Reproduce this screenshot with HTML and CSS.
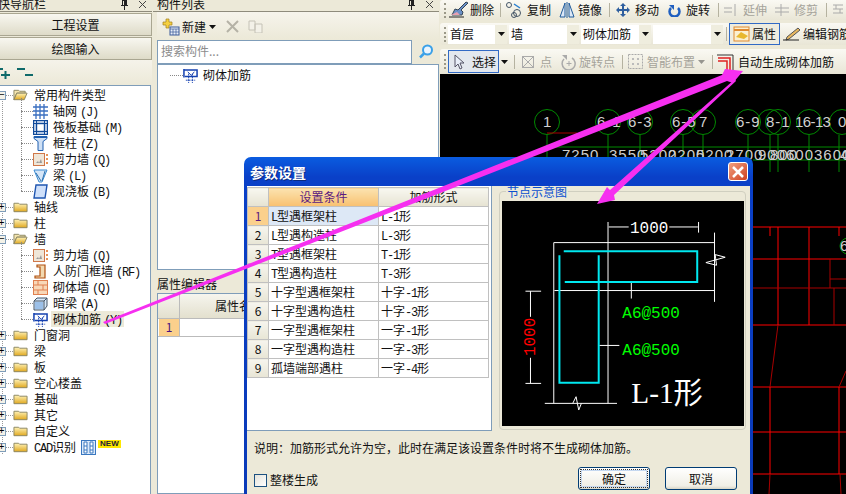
FILE: index.html
```html
<!DOCTYPE html>
<html lang="zh">
<head>
<meta charset="utf-8">
<title>参数设置</title>
<link rel="stylesheet" href="styles.css">
</head>
<body>
<svg class="defs" width="0" height="0">
  <defs>
    <linearGradient id="fy" x1="0" y1="0" x2="0" y2="1"><stop offset="0" stop-color="#fff3b8"/><stop offset="1" stop-color="#e0a820"/></linearGradient>
    <symbol id="folder" viewBox="0 0 16 12"><path d="M1 2h5l1 1h8v8H1z" fill="url(#fy)" stroke="#8a8460"/></symbol>
    <symbol id="folder-open" viewBox="0 0 16 12"><path d="M1 1h5l1 1h6v2H4L1 11z" fill="#f5e6b0" stroke="#8a8460"/><path d="M1 11l3-7h11l-3 7z" fill="url(#fy)" stroke="#8a8460"/></symbol>
    <symbol id="i-grid" viewBox="0 0 15 15"><path d="M0 3h15M0 7h15M0 11h15M3 0v15M7 0v15M11 0v15" stroke="#3a6fc0" stroke-width="1.3" fill="none"/></symbol>
    <symbol id="i-raft" viewBox="0 0 15 15"><rect x=".5" y=".5" width="14" height="14" fill="#dfe8f5" stroke="#0f4a9a" stroke-width="1.4"/><rect x="3.5" y="3.5" width="8" height="8" fill="#fff" stroke="#0f4a9a" stroke-width="1.4"/><path d="M0 3.5h15M0 11.5h15M3.5 0v15M11.5 0v15" stroke="#0f4a9a"/></symbol>
    <symbol id="i-col" viewBox="0 0 15 15"><path d="M1 .5h13v2l-4 3v9H5v-9l-4-3z" fill="#cfe0f5" stroke="#1f5fb0"/><path d="M1 1h13" stroke="#1f5fb0" stroke-width="2"/></symbol>
    <symbol id="i-shear" viewBox="0 0 15 15"><rect x=".5" y="1.500" width="11" height="12" fill="#efe6d8" stroke="#d0784a"/><path d="M3 11l2-2 1 2 2-4 1 4z" fill="#999"/><path d="M13 3h2M13 7h2M13 11h2" stroke="#e07020" stroke-width="1.500"/></symbol>
    <symbol id="i-beam" viewBox="0 0 15 15"><path d="M1 2h13L9 14H6z" fill="#d5e6f8" stroke="#3a8ad0"/><path d="M3 5l5 8M12 3l-3 10" stroke="#2a70b0"/></symbol>
    <symbol id="i-slab" viewBox="0 0 15 15"><path d="M3 1h11l-2 13H1z" fill="#cfe0fa" stroke="#1f55b0" stroke-width="1.400"/></symbol>
    <symbol id="i-door" viewBox="0 0 15 15"><path d="M4 1h8v13H2v-2h5V3H4z" fill="#f2d9b0" stroke="#b05010" stroke-width="1.200"/></symbol>
    <symbol id="i-brick" viewBox="0 0 15 15"><rect x=".5" y=".5" width="14" height="14" fill="#f8d8b8" stroke="#e08050"/><path d="M0 5h15M0 10h15M5 0v5M10 5v5M5 10v5" stroke="#e08050"/></symbol>
    <symbol id="i-hidden" viewBox="0 0 15 15"><path d="M1 5l3-3h10v8l-3 4H1z" fill="#d8e8f8" stroke="#456"/><path d="M1 5h10v9M11 5l3-3" stroke="#456" fill="none"/><rect x="2" y="6" width="8" height="7" fill="#9cc0e8"/></symbol>
    <symbol id="i-rebar" viewBox="0 0 16 16"><path d="M1 2h14v7H2" fill="none" stroke="#1440b0" stroke-width="1.600"/><path d="M1 1v9" stroke="#1440b0" stroke-width="1.600"/><path d="M6 6v10M10 6v10M3 13h10" stroke="#1440b0" fill="none" stroke-dasharray="2 1"/><path d="M5 4l4 4 3-4" stroke="#1440b0" fill="none"/></symbol>
    <symbol id="i-cad" viewBox="0 0 15 15"><rect x=".5" y=".5" width="14" height="14" fill="#dceafa" stroke="#3a78c0"/><path d="M3 2v11h3V2zM9 2v11h3V2zM3 6h3M3 10h3M9 6h3M9 10h3" stroke="#3a78c0" fill="#fff"/></symbol>
    <symbol id="i-pin" viewBox="0 0 9 10"><path d="M2 0h5v5h1v1H5v4H4V6H1V5h1zM3 1v4h1V1z" fill="#222"/></symbol>
    <symbol id="i-x" viewBox="0 0 9 9"><path d="M1 1l7 7M8 1L1 8" stroke="#444" fill="none"/></symbol>
    <symbol id="i-caret" viewBox="0 0 7 4"><path d="M0 0h7L3.500 4z" fill="#111"/></symbol>
  </defs>
</svg>

<div class="app">
  <aside class="nav">
    <div class="phead"><span class="ptitle nav-title">快导航栏</span><svg class="pin"><use href="#i-pin"/></svg><svg class="close"><use href="#i-x"/></svg></div>
    <div class="navbtn">工程设置</div>
    <div class="navbtn">绘图输入</div>
    <div class="navtools">
      <svg width="12" height="11" viewBox="0 0 12 11"><path d="M0 1h3M1 7h9M5.500 3v8" stroke="#0f6a6a" stroke-width="2" fill="none"/></svg>
      <svg width="16" height="9" viewBox="0 0 16 9"><path d="M0 1h8M8 7h8" stroke="#0f6a6a" stroke-width="2" fill="none"/></svg>
    </div>
    <div class="tree">
      <div class="row"><span class="exp">−</span><span class="stub"></span><svg class="fld"><use href="#folder-open"/></svg><span>常用构件类型</span></div>
      <div class="kids">
        <div class="kid"><svg class="ic"><use href="#i-grid"/></svg><span>轴网<i class="m">(J)</i></span></div>
        <div class="kid"><svg class="ic"><use href="#i-raft"/></svg><span>筏板基础<i class="m">(M)</i></span></div>
        <div class="kid"><svg class="ic"><use href="#i-col"/></svg><span>框柱<i class="m">(Z)</i></span></div>
        <div class="kid"><svg class="ic"><use href="#i-shear"/></svg><span>剪力墙<i class="m">(Q)</i></span></div>
        <div class="kid"><svg class="ic"><use href="#i-beam"/></svg><span>梁<i class="m">(L)</i></span></div>
        <div class="kid"><svg class="ic"><use href="#i-slab"/></svg><span>现浇板<i class="m">(B)</i></span></div>
      </div>
      <div class="row"><span class="exp">+</span><span class="stub"></span><svg class="fld"><use href="#folder"/></svg><span>轴线</span></div>
      <div class="row"><span class="exp">+</span><span class="stub"></span><svg class="fld"><use href="#folder"/></svg><span>柱</span></div>
      <div class="row"><span class="exp">−</span><span class="stub"></span><svg class="fld"><use href="#folder-open"/></svg><span>墙</span></div>
      <div class="kids">
        <div class="kid"><svg class="ic"><use href="#i-shear"/></svg><span>剪力墙<i class="m">(Q)</i></span></div>
        <div class="kid"><svg class="ic"><use href="#i-door"/></svg><span>人防门框墙<i class="m">(RF)</i></span></div>
        <div class="kid"><svg class="ic"><use href="#i-brick"/></svg><span>砌体墙<i class="m">(Q)</i></span></div>
        <div class="kid"><svg class="ic"><use href="#i-hidden"/></svg><span>暗梁<i class="m">(A)</i></span></div>
        <div class="kid"><svg class="ic"><use href="#i-rebar"/></svg><span class="sel">砌体加筋<i class="m">(Y)</i></span></div>
      </div>
      <div class="row"><span class="exp">+</span><span class="stub"></span><svg class="fld"><use href="#folder"/></svg><span>门窗洞</span></div>
      <div class="row"><span class="exp">+</span><span class="stub"></span><svg class="fld"><use href="#folder"/></svg><span>梁</span></div>
      <div class="row"><span class="exp">+</span><span class="stub"></span><svg class="fld"><use href="#folder"/></svg><span>板</span></div>
      <div class="row"><span class="exp">+</span><span class="stub"></span><svg class="fld"><use href="#folder"/></svg><span>空心楼盖</span></div>
      <div class="row"><span class="exp">+</span><span class="stub"></span><svg class="fld"><use href="#folder"/></svg><span>基础</span></div>
      <div class="row"><span class="exp">+</span><span class="stub"></span><svg class="fld"><use href="#folder"/></svg><span>其它</span></div>
      <div class="row"><span class="exp">+</span><span class="stub"></span><svg class="fld"><use href="#folder"/></svg><span>自定义</span></div>
      <div class="row"><span class="exp">+</span><span class="stub"></span><svg class="fld"><use href="#folder"/></svg><span><i class="m">CAD</i>识别</span><svg class="cad"><use href="#i-cad"/></svg><b class="new">NEW</b></div>
    </div>
  </aside>

  <section class="mid">
    <div class="phead"><span class="ptitle">构件列表</span><svg class="pin"><use href="#i-pin"/></svg><svg class="close"><use href="#i-x"/></svg></div>
    <div class="midtools">
      <svg width="18" height="18" viewBox="0 0 18 18"><path d="M4 1h3v3h3v3H7v3H4V7H1V4h3z" fill="#f5d040" stroke="#a08020" stroke-width=".7"/><rect x="8" y="9" width="9" height="8" fill="#e8eef8" stroke="#3a5a9a"/><path d="M8 11h9M11 11v6M14 11v6M8 14h9" stroke="#3a5a9a" stroke-width=".7"/></svg>
      <span>新建</span><svg class="caret"><use href="#i-caret"/></svg>
      <svg class="del" width="13" height="13" viewBox="0 0 13 13"><path d="M1 1l11 11M12 1L1 12" stroke="#b5b2a6" stroke-width="2"/></svg>
      <svg class="cpy" width="16" height="13" viewBox="0 0 16 13"><path d="M1 1h6v9H1zM7 4h7v9H7z" fill="#f3f1e8" stroke="#c5c2b6"/></svg>
    </div>
    <div class="search">
      <div class="sinput">搜索构件...</div>
      <svg width="16" height="16" viewBox="0 0 16 16"><circle cx="9.500" cy="6" r="4.500" fill="#eaf5ff" stroke="#3aa0e8" stroke-width="2"/><path d="M6 9.500l-4 4" stroke="#3aa0e8" stroke-width="2.500"/></svg>
    </div>
    <div class="listbox">
      <div class="listrow"><span class="stub2"></span><svg class="ic"><use href="#i-rebar"/></svg><span>砌体加筋</span></div>
    </div>
    <div class="ptitle2">属性编辑器</div>
    <div class="props">
      <div class="pr-h"><span class="pr-n"></span><span class="pr-t">属性名称</span></div>
      <div class="pr-r"><span class="pr-n num">1</span><span class="pr-v"></span></div>
    </div>
  </section>

  <main class="work">
    <div class="bar bar1">
      <span class="grip"></span>
      <span class="tool t-del"><svg width="19" height="18" viewBox="0 0 19 18"><path d="M17 1l-8 8-3-1-3 6h10l1-3-2-2 7-7z" fill="#6a90c8" stroke="#345"/><path d="M2 14l6-3 3 3" fill="#e8a0b0"/><path d="M0 16h15" stroke="#222"/></svg>删除</span>
      <span class="sep"></span>
      <span class="tool t-cpy"><svg width="17" height="16" viewBox="0 0 17 16"><circle cx="3" cy="3" r="2.500" fill="none" stroke="#456"/><circle cx="11" cy="11" r="3.500" fill="none" stroke="#456"/><circle cx="8" cy="13" r="2.500" fill="none" stroke="#456"/><path d="M8 2l6 4" stroke="#2a80d0" stroke-width="1.500"/></svg>复制</span>
      <span class="tool t-mir"><svg width="16" height="16" viewBox="0 0 16 16"><path d="M6 1L1 15h5zM10 1l5 14h-5z" fill="#dce8f8" stroke="#1f5a9a"/><path d="M8 0v16" stroke="#1f5a9a"/></svg>镜像</span>
      <span class="sep"></span>
      <span class="tool t-mov"><svg width="14" height="14" viewBox="0 0 14 14"><path d="M7 0l3 3H8v3h3V4l3 3-3 3V8H8v3h2l-3 3-3-3h2V8H3v2L0 7l3-3v2h3V3H4z" fill="#2f5f9f"/></svg>移动</span>
      <span class="tool t-rot"><svg width="13" height="13" viewBox="0 0 13 13"><path d="M3 4a5 5 0 1 0 7 0" fill="none" stroke="#1f5fc0" stroke-width="2.500"/><path d="M1 1h5v5z" fill="#1f5fc0"/></svg>旋转</span>
      <span class="sep"></span>
      <span class="tool off t-ext"><svg width="14" height="12" viewBox="0 0 14 12"><path d="M0 4h8M0 8h8M11 0v12" stroke="#aaa" fill="none"/></svg>延伸</span>
      <span class="tool off t-trm"><svg width="14" height="12" viewBox="0 0 14 12"><path d="M0 4h14M0 8h14M6 0v12" stroke="#aaa" fill="none"/></svg>修剪</span>
      <span class="sep"></span>
      <span class="tool off"><svg width="14" height="14" viewBox="0 0 14 14"><path d="M2 2h10M2 6h10M2 10h10M5 2v4M9 6v4" stroke="#aaa" fill="none"/></svg></span>
    </div>
    <div class="bar bar2">
      <span class="grip"></span>
      <div class="combo c1"><span>首层</span><b><svg class="caret"><use href="#i-caret"/></svg></b></div>
      <div class="combo c1 c2"><span>墙</span><b><svg class="caret"><use href="#i-caret"/></svg></b></div>
      <div class="combo c1 c2"><span>砌体加筋</span><b><svg class="caret"><use href="#i-caret"/></svg></b></div>
      <div class="combo c1 c2"><span></span><b><svg class="caret"><use href="#i-caret"/></svg></b></div>
      <span class="sep"></span>
      <span class="btnon attr"><svg width="18" height="16" viewBox="0 0 18 16"><rect x="1" y="1" width="15" height="14" fill="#fbf0d0" stroke="#e08a30"/><path d="M3 11l5-5 7 4-4 3z" fill="#e8b830"/><path d="M1 4h15" stroke="#e08a30" stroke-width="2"/></svg>属性</span>
      <span class="tool t-edit"><svg width="18" height="14" viewBox="0 0 18 14"><path d="M4 10L15 1l2 2-11 9-3 1z" fill="#e8b860" stroke="#555"/><path d="M0 13h16" stroke="#222"/></svg>编辑钢筋</span>
    </div>
    <div class="bar bar3">
      <span class="grip"></span>
      <span class="btnon pick"><svg width="12" height="16" viewBox="0 0 12 16"><path d="M1 1v12l3-3 2 5 2-1-2-5h4z" fill="#e8eef8" stroke="#556"/></svg>选择</span>
      <svg class="caret c-sel"><use href="#i-caret"/></svg>
      <span class="sep s-a"></span>
      <span class="tool off t-pt"><svg width="12" height="12" viewBox="0 0 12 12"><rect x=".5" y=".5" width="11" height="11" fill="none" stroke="#aaa"/><path d="M0 0l12 12M12 0L0 12" stroke="#aaa"/></svg>点</span>
      <span class="tool off t-rp"><svg width="16" height="16" viewBox="0 0 16 16"><path d="M3 5a6.500 6.500 0 1 0 8-1" fill="none" stroke="#aaa" stroke-width="1.500"/><path d="M1 1h5v5z" fill="#aaa"/><path d="M8 7v5M5.500 9.500h5" stroke="#aaa"/></svg>旋转点</span>
      <span class="sep s-b"></span>
      <span class="tool off t-sm"><svg width="15" height="15" viewBox="0 0 15 15"><rect x=".5" y=".5" width="14" height="14" fill="none" stroke="#aaa" stroke-dasharray="2 1"/><path d="M4 4h2v2H4zM9 4h2v2H9zM4 9h2v2H4zM9 9h2v2H9z" fill="#bbb"/></svg>智能布置</span>
      <svg class="caret c-sm"><use href="#i-caret"/></svg>
      <span class="sep s-c"></span>
      <span class="tool t-auto"><svg width="17" height="16" viewBox="0 0 17 16"><path d="M0 1h16v15" fill="none" stroke="#333"/><path d="M1 4h12v12M1 7h9v9" fill="none" stroke="#e02020" stroke-width="1.500"/></svg>自动生成砌体加筋</span>
    </div>
    <svg class="cad-view" viewBox="440 74 406 420" width="406" height="420">
      <g class="g-line">
        <circle cx="547" cy="122" r="12.500"/><circle cx="608" cy="122" r="12.500"/><circle cx="640" cy="122" r="12.500"/><circle cx="683" cy="122" r="12.500"/><circle cx="703" cy="122" r="12.500"/><circle cx="748" cy="122" r="12.500"/><circle cx="770" cy="122" r="12.500"/><circle cx="778" cy="122" r="12.500"/><circle cx="809" cy="122" r="12.500"/><circle cx="842" cy="122" r="12.500"/><circle cx="848" cy="246" r="8"/>
        <path d="M547 135v37M608 135v37M640 135v37M683 135v37M703 135v37M748 135v37M770 135v37M778 135v37M809 135v37M839 135v37M545 147h301M753 160h93"/>
      </g>
      <path class="r-dark" d="M547 133h30"/>
      <g class="cad-txt">
        <text x="543" y="127">1</text><text x="597" y="127">6-1</text><text x="628" y="127">6-3</text><text x="672" y="127">6-5</text><text x="699" y="127">7</text><text x="736" y="127">6-9</text><text x="766" y="127">8-1</text><text x="795" y="127" class="tight">16-13</text><text x="838" y="127">0-</text><text x="840" y="251">6</text>
        <text x="562" y="160">7250</text><text x="609" y="160">3550</text><text x="640" y="160">5200</text><text x="668" y="160">2200</text><text x="696" y="160">5200</text><text x="726" y="160">2700</text><text x="758" y="160">900</text><text x="770" y="160">800</text><text x="786" y="160">600</text><text x="814" y="160">3600</text><text x="840" y="160">4</text>
      </g>
      <path class="r-line" d="M753 227h93M753 259h93M778 227v98M809 227v98M770 227v9M839 227v9M753 325h93M753 387h93M753 432h93M753 474h93M770 387v87M839 387v87"/>
      <path class="r-dark" d="M753 288h93M830 259v29M830 279h16M834 288v37M778 325l-8 62M846 371l-7 16M770 474l-1 20M840 474l1 20"/>
    </svg>
  </main>
</div>

<div class="dialog">
  <div class="dtitle"><span>参数设置</span><b class="dclose"><svg width="12" height="12" viewBox="0 0 12 12"><path d="M1 1l10 10M11 1L1 11" stroke="#fff" stroke-width="2.500"/></svg></b></div>
  <div class="dbody">
    <div class="dmain">
      <div class="dtable">
        <table>
          <thead><tr><th class="rh"></th><th class="hot">设置条件</th><th>加筋形式</th></tr></thead>
          <tbody>
            <tr><th class="rh hotn">1</th><td class="cur"><i class="m">L</i>型遇框架柱</td><td><i class="m">L-1</i>形</td></tr>
            <tr><th class="rh">2</th><td><i class="m">L</i>型遇构造柱</td><td><i class="m">L-3</i>形</td></tr>
            <tr><th class="rh">3</th><td><i class="m">T</i>型遇框架柱</td><td><i class="m">T-1</i>形</td></tr>
            <tr><th class="rh">4</th><td><i class="m">T</i>型遇构造柱</td><td><i class="m">T-3</i>形</td></tr>
            <tr><th class="rh">5</th><td>十字型遇框架柱</td><td>十字<i class="m">-1</i>形</td></tr>
            <tr><th class="rh">6</th><td>十字型遇构造柱</td><td>十字<i class="m">-3</i>形</td></tr>
            <tr><th class="rh">7</th><td>一字型遇框架柱</td><td>一字<i class="m">-1</i>形</td></tr>
            <tr><th class="rh">8</th><td>一字型遇构造柱</td><td>一字<i class="m">-3</i>形</td></tr>
            <tr><th class="rh">9</th><td>孤墙端部遇柱</td><td>一字<i class="m">-4</i>形</td></tr>
          </tbody>
        </table>
      </div>
      <fieldset class="preview">
        <legend>节点示意图</legend>
        <svg class="node" viewBox="20 137 726 676" width="242" height="225">
          <g class="n-w">
            <path d="M175 262H658M175 262V745M338 200V745M177 406H658M658 232V440M148 745H365M610 200V232M340 215H400M522 215H608M90 408H137M90 685H137M105 408V485M105 608V685M408 380V430M312 571H372"/>
            <path d="M232 745l10-20 8 40 8-20M632 322l58-16-30-8 4 32-32-8"/>
          </g>
          <path class="n-c" d="M205 288H606V380H208M310 300V683H192V300"/>
          <text class="n-t" x="404" y="232">1000</text>
          <text class="n-r" transform="translate(120 603) rotate(-90)">1000</text>
          <text class="n-g" x="381" y="490">A6@500</text>
          <text class="n-g" x="381" y="601">A6@500</text>
          <text class="n-l" x="408" y="745">L-1形</text>
        </svg>
      </fieldset>
    </div>
    <p class="note">说明：加筋形式允许为空，此时在满足该设置条件时将不生成砌体加筋。</p>
    <div class="dfoot">
      <label class="chk"><span class="box"></span>整楼生成</label>
      <div class="btns"><span class="btn def"><span>确定</span></span><span class="btn"><span>取消</span></span></div>
    </div>
  </div>
</div>

<svg class="arrows" viewBox="0 0 846 494" width="846" height="494">
  <polygon points="103,322 722,75 725,69 743,71 733,83 727,81 105,324"/>
  <polygon points="735,79 736,81 614,195 615,200 597,204 607,187 610,190"/>
</svg>
</body>
</html>
```
FILE: styles.css
```css
* { box-sizing: border-box; }
html, body { margin: 0; padding: 0; }
body {
  width: 846px; height: 494px; overflow: hidden; position: relative;
  background: #ece9d8; color: #111;
  font: 12px/16px "Noto Sans CJK SC", "Liberation Sans", sans-serif;
}
.defs { position: absolute; }
.m { font: normal 12px/12px "Liberation Mono", monospace; letter-spacing: -1.2px; }
.app { display: flex; height: 494px; }

/* left nav */
.nav { width: 152px; flex: none; display: flex; flex-direction: column; overflow: hidden; }
.phead { height: 12px; display: flex; align-items: flex-start; overflow: hidden; border-bottom: 1px solid #8e8b7c; background: #ece9d8; position: relative; }
.ptitle { line-height: 8px; white-space: nowrap; flex: 1; }
.nav-title { margin-left: -2px; }
.pin { width: 9px; height: 10px; margin: 0 9px 0 0; }
.close { width: 9px; height: 9px; margin: 0 5px 0 0; }
.navbtn { height: 23px; margin-top: 1px; line-height: 22px; text-align: center; border: 1px solid #a9a691; border-left: 0; background: linear-gradient(#f8f7f0, #dedbc8); }
.navtools { height: 25px; padding: 8px 0 0 0; display: flex; gap: 5px; background: linear-gradient(#f5f3ea, #ece9d8); }
.navtools svg { flex: none; }
.tree { flex: 1; background: #fff; border: 1px solid #7f9db9; border-left: 0; border-bottom: 0; width: 151px; padding-top: 1px; position: relative; }
.tree::before { content: ""; position: absolute; left: 2px; top: 8px; height: 360px; border-left: 1px dotted #999; }
.row { height: 16px; display: flex; align-items: center; white-space: nowrap; position: relative; }
.exp { width: 9px; height: 9px; margin-left: -3px; border: 1px solid #7f9db9; background: #f4f2e8; font: 10px/7px "Liberation Mono", monospace; text-align: center; flex: none; color: #000; }
.stub { width: 7px; border-top: 1px dotted #999; flex: none; }
.fld { width: 15px; height: 12px; margin-right: 6px; flex: none; }
.kids { margin-left: 21px; position: relative; }
.kids::before { content: ""; position: absolute; left: 0; top: -5px; bottom: 8px; border-left: 1px dotted #888; }
.kid { height: 16px; display: flex; align-items: center; padding-left: 12px; white-space: nowrap; position: relative; }
.kid::before { content: ""; position: absolute; left: 0; top: 8px; width: 12px; border-top: 1px dotted #888; }
.ic { width: 15px; height: 15px; margin-right: 5px; flex: none; }
.kid .m { margin-left: 3px; }
.sel { background: #ece9d8; margin-left: -2px; padding: 0 2px; width: 73px; }
.cad { width: 15px; height: 15px; margin-left: 5px; flex: none; }
.new { font: bold 8px/8px "Liberation Sans", sans-serif; background: #ffe800; color: #223; padding: 0 2px; margin: -7px 0 0 2px; }

/* middle */
.mid { width: 286px; margin-left: 1px; flex: none; display: flex; flex-direction: column; background: #ece9d8; }
.mid .ptitle { padding-left: 4px; }
.midtools { height: 27px; margin-left: 4px; padding: 2px 0 0 5px; display: flex; align-items: center; background: linear-gradient(#f6f4ec, #ece9d8); }
.midtools > svg:first-child { margin-right: 2px; }
.midtools .caret { margin-left: 3px; }
.caret { width: 7px; height: 4px; flex: none; }
.del { margin-left: 10px; }
.cpy { margin-left: 9px; }
.search { height: 25px; margin-left: 4px; display: flex; align-items: center; background: #ece9d8; }
.sinput { width: 255px; height: 24px; line-height: 20px; padding-left: 3px; background: #fff; border: 1px solid #7f9db9; color: #8c8c8c; margin-right: 6px; }
.listbox { height: 206px; margin-left: 4px; background: #fff; border: 1px solid #7f9db9; padding-top: 2px; }
.listrow { height: 16px; display: flex; align-items: center; }
.stub2 { width: 13px; margin-left: 12px; border-top: 1px dotted #888; }
.ptitle2 { height: 15px; margin: 7px 0 1px 4px; line-height: 14px; background: #ece9d8; overflow: hidden; }
.props { flex: 1; margin-left: 4px; background: #fff; border: 1px solid #7f9db9; border-right: 0; overflow: hidden; }
.pr-h, .pr-r { display: flex; }
.pr-h { height: 25px; background: linear-gradient(#f6f5ee, #e3e0ce); border-bottom: 1px solid #bbb; line-height: 24px; }
.pr-r { height: 18px; border-bottom: 1px solid #bbb; }
.pr-n { width: 21px; border-right: 1px solid #bbb; flex: none; margin-left: 1px; text-align: center; }
.pr-t { flex: 1; padding-left: 35px; white-space: nowrap; }
.num { background: #fbd08c; color: #4a1080; }

/* right */
.work { flex: 1; min-width: 0; margin-left: 1px; display: flex; flex-direction: column; overflow: hidden; }
.bar { display: flex; align-items: center; white-space: nowrap; background: linear-gradient(#faf9f3, #e9e6d6); border-radius: 3px 0 0 3px; flex: none; }
.bar1 { height: 20px; margin-bottom: 3px; }
.bar2 { height: 22px; margin-bottom: 4px; }
.bar3 { height: 25px; }
.grip { width: 3px; height: 15px; margin-left: 4px; border-left: 2px dotted #9a9888; flex: none; }
.tool { display: inline-flex; align-items: center; gap: 3px; flex: none; }
.off { color: #a5a39a; }
.sep { width: 1px; height: 14px; background: #b5b2a0; flex: none; }
.t-del { margin-left: 2px; margin-right: 6px; gap: 2px; }
.t-cpy { margin-left: 5px; gap: 4px; }
.t-mir { margin-left: 8px; }
.t-del + .sep + .t-cpy + .t-mir + .sep { margin-left: 7px; }
.t-mov { margin-left: 6px; gap: 5px; }
.t-rot { margin-left: 9px; gap: 5px; }
.t-rot + .sep { margin-left: 8px; }
.t-ext { margin-left: 5px; gap: 5px; }
.t-trm { margin-left: 8px; gap: 5px; }
.t-trm + .sep { margin-left: 8px; }
.bar1 .sep + .off:last-child { margin-left: 4px; }
.combo { width: 59px; height: 19px; margin-left: 1px; display: flex; background: #fff; justify-content: space-between; line-height: 17px; padding-left: 2px; flex: none; }
.c2 { width: 70px; margin-left: 2px; }
.combo b { width: 12px; display: flex; align-items: center; justify-content: center; background: #efedde; }
.bar2 .sep { margin: 0 2px 0 3px; }
.btnon { display: inline-flex; align-items: center; border: 1px solid #316ac5; background: #e3e8ee; flex: none; }
.attr { width: 51px; height: 22px; padding-left: 3px; gap: 1px; background: #eeecdf; }
.t-edit { margin-left: 3px; gap: 2px; }
.pick { width: 51px; height: 23px; padding-left: 5px; gap: 6px; margin-left: 1px; }
.c-sel { margin-left: 2px; }
.s-a { margin-left: 6px; }
.t-pt { margin-left: 7px; gap: 6px; }
.t-rp { margin-left: 9px; gap: 2px; }
.s-b { margin-left: 7px; }
.t-sm { margin-left: 5px; gap: 4px; }
.c-sm { margin-left: 3px; opacity: .4; }
.s-c { margin-left: 7px; }
.t-auto { margin-left: 4px; gap: 4px; }
.cad-view { display: block; background: #000; flex: none; }
.g-line { fill: none; stroke: #008a00; stroke-width: 1; }
.r-line { fill: none; stroke: #ff0000; stroke-width: 1; }
.r-dark { fill: none; stroke: #a80000; stroke-width: 1; }
.cad-txt { fill: #d0d0d0; font: 15px "Liberation Sans", sans-serif; letter-spacing: 1px; }
.cad-txt .tight { letter-spacing: -.6px; }

/* dialog */
.dialog { position: absolute; left: 244px; top: 157px; width: 509px; height: 340px; border-radius: 7px 7px 0 0; background: linear-gradient(#0a5ce0, #0a40c8 20px, #0a3ab8); padding: 0 3px; display: flex; flex-direction: column; }
.dtitle { height: 29px; display: flex; align-items: center; justify-content: space-between; padding: 0 2px 0 3px; color: #fff; font-weight: bold; font-size: 14px; text-shadow: 1px 1px #0a2a80; }
.dclose { width: 20px; height: 19px; display: flex; align-items: center; justify-content: center; background: linear-gradient(135deg, #f0a080, #d04020); border: 1px solid #fff; border-radius: 3px; }
.dbody { flex: 1; background: #ece9d8; display: flex; flex-direction: column; }
.dmain { display: flex; height: 245px; }
.dtable { width: 245px; height: 245px; background: #fff; padding: 1px 0 0 0; flex: none; border-right: 1px solid #7f9db9; border-bottom: 1px solid #7f9db9; }
.dtable table { border-collapse: collapse; table-layout: fixed; width: 242px; margin-left: 0; }
.dtable th, .dtable td { height: 19px; padding: 0; border: 1px solid #c0c0c0; font-weight: normal; line-height: 16px; white-space: nowrap; overflow: hidden; }
.dtable thead th { background: linear-gradient(#f8f7f0, #e6e3d2); text-align: center; }
.dtable thead th:nth-child(1) { width: 21px; }
.dtable thead th:nth-child(2) { width: 110px; }
.dtable th.hot { background: linear-gradient(#fbe3b0, #f8c070); color: #5b1a80; }
.dtable td { padding-left: 2px; }
.rh { background: linear-gradient(#f6f5ee, #e8e5d5); text-align: center; }
.dtable th.hotn { background: #fbd08c; color: #5b1a80; }
.dtable td.cur { background: #dde8f6; }
.preview { width: 247px; height: 244px; margin: 0 0 0 7px; padding: 4px 0 0 2px; border: 1px solid #d0cfc0; border-radius: 4px; flex: none; }
.preview legend { color: #0a50d0; padding: 0 1px; margin-left: 4px; line-height: 11px; font-size: 12px; }
.node { display: block; background: #000; }
.n-w { fill: none; stroke: #fff; stroke-width: 3; }
.n-c { fill: none; stroke: #00e8f0; stroke-width: 6; }
.n-t, .n-r, .n-g { font: 48px "Liberation Mono", monospace; }
.n-t { fill: #fff; }
.n-r { fill: #ff0000; }
.n-g { fill: #00ff00; }
.n-l { fill: #fff; font: 88px "Liberation Serif", "Noto Sans CJK SC", serif; }
.note { margin: 9px 0 0 7px; line-height: 16px; white-space: nowrap; }
.dfoot { display: flex; justify-content: space-between; margin-top: 11px; padding: 0 13px 0 7px; }
.chk { display: flex; align-items: center; gap: 3px; margin-top: 5px; height: 16px; }
.box { width: 13px; height: 13px; border: 1px solid #1c5180; background: linear-gradient(135deg, #e4e3da, #fff); }
.btns { display: flex; gap: 15px; }
.btn { width: 72px; height: 23px; border: 1px solid #003c74; border-radius: 3px; background: linear-gradient(#fff, #f0efe6 85%, #d8d5c5); text-align: center; line-height: 20px; padding: 1px; }
.btn > span { display: block; }
.def > span { border: 1px dotted #333; height: 19px; line-height: 17px; box-shadow: inset 0 0 0 1px #c5d8f0; }

.arrows { position: absolute; left: 0; top: 0; fill: #f62ff0; pointer-events: none; }
```
